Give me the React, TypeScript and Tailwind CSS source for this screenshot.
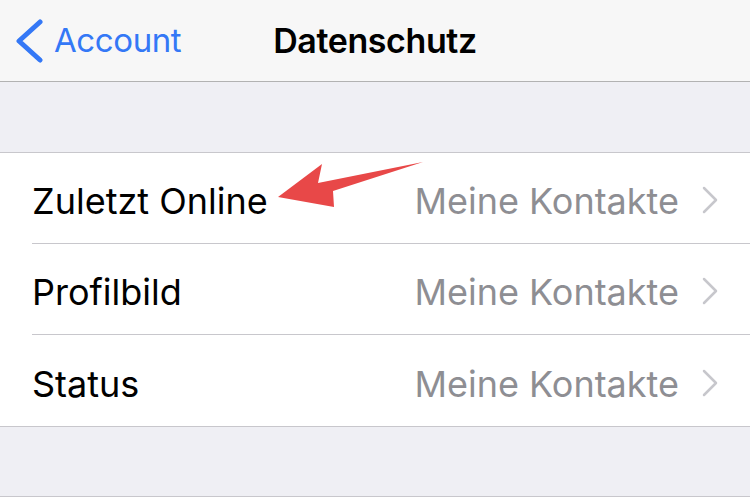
const rows = [
  { label: "Zuletzt Online", value: "Meine Kontakte" },
  { label: "Profilbild", value: "Meine Kontakte" },
  { label: "Status", value: "Meine Kontakte" },
];

function Arrow() {
  return (
    <svg className="absolute left-0 top-0 pointer-events-none" width="750" height="500" viewBox="0 0 750 500">
      <polygon points="278,197 322,164 318,183 423,162 333,191 334,207" fill="#e84848" />
    </svg>
  );
}

function Disclosure() {
  return (
    <svg className="ml-[23px] mt-[4px]" width="16" height="28" viewBox="0 0 16 28">
      <path d="M2 2 L14 14 L2 26" fill="none" stroke="#c7c7cc" strokeWidth="2.5" strokeLinecap="round" strokeLinejoin="round" />
    </svg>
  );
}

export default function App() {
  return (
    <div className="relative w-[750px] h-[500px] overflow-hidden bg-[#efeff4]" style={{ fontFamily: "Inter, 'Noto Sans', sans-serif" }}>
      <header className="relative h-[82px] bg-[#f7f7f7] border-b border-[#b2b2b2] flex items-center">
        <h1 className="absolute left-0 right-0 text-center text-[34px] font-semibold tracking-[-0.4px] text-black leading-none">
          Datenschutz
        </h1>
        <div className="relative flex items-center pl-[15px]">
          <svg width="30" height="44" viewBox="0 0 30 44">
            <path d="M25 3 L4 22 L25 41" fill="none" stroke="#3478f6" strokeWidth="5" strokeLinecap="round" strokeLinejoin="round" />
          </svg>
          <span className="ml-[9px] text-[33px] tracking-[-0.4px] leading-none text-[#3478f6]">Account</span>
        </div>
      </header>

      <div className="h-[70px]" />

      <section className="bg-white border-y border-[#c8c7cc]">
        {rows.map((row, i) => (
          <div key={row.label} className="pl-[32px]">
            <div className={`h-[91px] flex items-center pr-[32px] ${i < rows.length - 1 ? "border-b border-[#c8c7cc]" : ""}`}>
              <span className="text-[36px] text-black flex-1 pt-[6px]">{row.label}</span>
              <span className="text-[36px] text-[#8e8e93] pt-[6px]">{row.value}</span>
              <Disclosure />
            </div>
          </div>
        ))}
      </section>

      <div className="h-[70px] border-b border-[#c8c7cc]" />
      <div className="h-[10px] bg-white" />

      <Arrow />
    </div>
  );
}
